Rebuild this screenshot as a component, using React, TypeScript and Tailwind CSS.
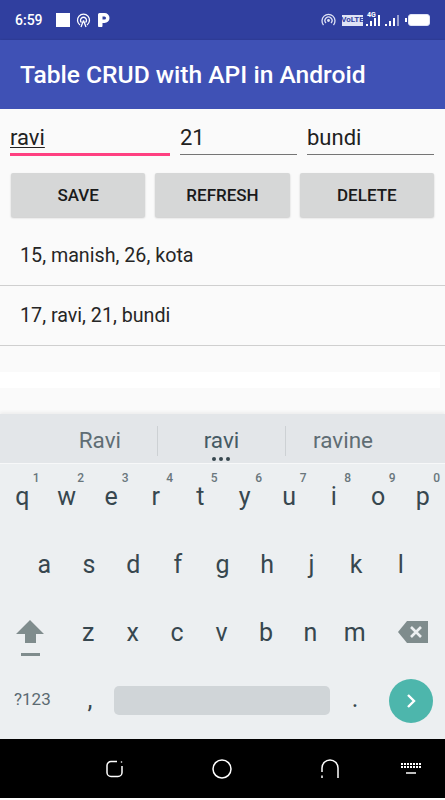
const ROBOTO = { fontFamily: 'Roboto, sans-serif' }

const ROW_ONE = [
  ['q', '1'],
  ['w', '2'],
  ['e', '3'],
  ['r', '4'],
  ['t', '5'],
  ['y', '6'],
  ['u', '7'],
  ['i', '8'],
  ['o', '9'],
  ['p', '0'],
]
const ROW_TWO = ['a', 's', 'd', 'f', 'g', 'h', 'j', 'k', 'l']
const ROW_THREE = ['z', 'x', 'c', 'v', 'b', 'n', 'm']

function StatusBar() {
  return (
    <div className="flex h-10 items-center bg-[#303f9f] pl-[15px] pr-[15px] text-white">
      <span className="text-[14px] font-medium">6:59</span>
      <div className="ml-[13px] h-[14px] w-[14px] bg-white" />
      <svg className="ml-[6px]" width="15" height="15" viewBox="0 0 15 15" fill="none" stroke="white" strokeWidth="1.3">
        <path d="M4 12 A6 6 0 1 1 11 12" />
        <path d="M5.5 9.5 A3 3 0 1 1 9.5 9.5" />
        <path d="M7.5 7.5 L5 14 M7.5 7.5 L10 14" />
      </svg>
      <svg className="ml-[7px]" width="12" height="14" viewBox="0 0 12 14" fill="white">
        <path fillRule="evenodd" d="M0 1.5 A1.5 1.5 0 0 1 1.5 0 H6.5 A5 5 0 0 1 6.5 10 H4.5 V12.5 A1.5 1.5 0 0 1 0 12.5 Z M4.5 3.5 V6.5 H6.5 A1.5 1.5 0 0 0 6.5 3.5 Z" />
      </svg>
      <svg className="ml-auto" width="15" height="15" viewBox="0 0 15 15" fill="none" stroke="#dfe3f5" strokeWidth="1.3">
        <path d="M2.5 12 A6.5 6.5 0 1 1 12.5 12" />
        <path d="M5 10 A3.5 3.5 0 1 1 10 10" />
        <circle cx="7.5" cy="7.5" r="0.8" fill="#dfe3f5" />
      </svg>
      <div className="relative ml-[6px] flex h-[11px] w-[21px] items-center justify-center bg-[#dfe3f5] text-[8px] font-bold leading-none text-[#303f9f]">
        VoLTE
      </div>
      <div className="relative ml-[3px] flex h-[12px] items-end gap-[2px]">
        <span className="absolute left-[1px] top-[-2px] text-[7px] font-bold leading-none text-white">4G</span>
        <div className="h-[2px] w-[2px] bg-white" />
        <div className="h-[5px] w-[2px] bg-white" />
        <div className="h-[8px] w-[2px] bg-white" />
        <div className="h-[11px] w-[2px] bg-white" />
      </div>
      <div className="ml-[5px] flex h-[12px] items-end gap-[2px]">
        <div className="h-[2px] w-[2px] bg-white" />
        <div className="h-[5px] w-[2px] bg-white" />
        <div className="h-[8px] w-[2px] bg-white" />
        <div className="h-[11px] w-[2px] bg-white/50" />
      </div>
      <div className="ml-[6px] h-[4px] w-[2px] bg-white" />
      <div className="ml-[1px] h-[12px] w-[22px] rounded-[3px] border border-[#dfe3f5] bg-white" />
    </div>
  )
}

function Field({ value, focused, className }: { value: string; focused?: boolean; className: string }) {
  return (
    <div
      className={
        focused
          ? `h-[35px] border-b-[3px] border-[#ff4081] text-[22px] leading-[33px] text-[#212121] ${className}`
          : `h-[34px] border-b border-[#757575] text-[22px] leading-[33px] text-[#212121] ${className}`
      }
    >
      {focused ? <span className="underline decoration-1 underline-offset-[2px]">{value}</span> : value}
    </div>
  )
}

function ActionButton({ label }: { label: string }) {
  return (
    <button
      type="button"
      className="h-[44px] rounded-[2px] bg-[#d6d7d7] pt-[2px] text-[17px] font-medium text-[#1a1a1a] shadow-[0_1px_2px_rgba(0,0,0,0.2)]"
    >
      {label}
    </button>
  )
}

function Key({ label, hint }: { label: string; hint?: string }) {
  return (
    <div className="relative flex items-center justify-center pb-[2px] text-[25px] leading-none text-[#37474f]">
      {hint && <span className="absolute right-[5px] top-[8px] text-[12px] font-medium text-[#69767c]">{hint}</span>}
      {label}
    </div>
  )
}

function Keyboard() {
  return (
    <div className="relative bg-[#eceff1] shadow-[0_-2px_3px_rgba(0,0,0,0.05)]">
      <div className="relative flex h-[49px] items-center bg-[#e3e6e9] pt-[4px] text-[22.5px] text-[#5f6d74]">
        <div className="flex w-[157px] justify-end pr-[36px]">Ravi</div>
        <div className="h-[30px] w-px bg-[#cdd1d4]" />
        <div className="flex w-[127px] justify-center text-[#455a64]">ravi</div>
        <div className="h-[30px] w-px bg-[#cdd1d4]" />
        <div className="pl-[27px]">ravine</div>
        <div className="absolute bottom-[2px] left-[212px] flex gap-[3px]">
          <div className="h-[4px] w-[4px] rounded-full bg-[#37474f]" />
          <div className="h-[4px] w-[4px] rounded-full bg-[#37474f]" />
          <div className="h-[4px] w-[4px] rounded-full bg-[#37474f]" />
        </div>
      </div>
      <div className="grid h-[68px] grid-cols-10 border-t border-[#f7f8f9]">
        {ROW_ONE.map(([k, n]) => (
          <Key key={k} label={k} hint={n} />
        ))}
      </div>
      <div className="grid h-[68px] grid-cols-9 px-[22px]">
        {ROW_TWO.map((k) => (
          <Key key={k} label={k} />
        ))}
      </div>
      <div className="flex h-[68px] items-center">
        <div className="flex w-[66px] justify-center pr-[6px] pt-[10px]">
          <svg width="32" height="38" viewBox="0 0 32 38" fill="#7f8c8d">
            <path d="M16 1 L30 15 H22 V24 H11 V15 H2 Z" />
            <rect x="7" y="34" width="19" height="3" />
          </svg>
        </div>
        <div className="grid h-full w-[311px] grid-cols-7">
          {ROW_THREE.map((k) => (
            <Key key={k} label={k} />
          ))}
        </div>
        <div className="flex flex-1 justify-end pb-[3px] pr-[17px]">
          <svg width="30" height="22" viewBox="0 0 30 22">
            <path d="M9 0 H30 V22 H9 L0 11 Z" fill="#7f8c8d" />
            <path d="M13 6 L23 16 M23 6 L13 16" stroke="#eceff1" strokeWidth="2.6" />
          </svg>
        </div>
      </div>
      <div className="flex h-[72px] items-center pb-[5px]">
        <div className="w-[66px] pb-[1px] pl-[14px] text-[17px] text-[#5b6a72]">?123</div>
        <div className="w-[48px] pb-[3px] text-center text-[25px] leading-none text-[#37474f]">,</div>
        <div className="h-[29px] w-[216px] rounded-[5px] bg-[#d0d5d8]" />
        <div className="w-[50px] pb-[4px] text-center text-[25px] leading-none text-[#37474f]">.</div>
        <div className="ml-[9px] flex h-[44px] w-[44px] items-center justify-center rounded-full bg-[#4db6ac]">
          <svg width="14" height="16" viewBox="0 0 14 16" fill="none" stroke="white" strokeWidth="2.4">
            <path d="M4 2 L10 8 L4 14" />
          </svg>
        </div>
      </div>
    </div>
  )
}

function NavBar() {
  return (
    <div className="relative flex h-[59px] items-center bg-black">
      <svg className="ml-[105px]" width="20" height="20" viewBox="0 0 20 20" fill="none" stroke="white" strokeWidth="1.5">
        <path d="M12 2.5 H6 A4 4 0 0 0 2 6.5 V13.5 A4 4 0 0 0 6 17.5 H13 A4 4 0 0 0 17 13.5 V7" />
        <circle cx="16.5" cy="3" r="0.8" fill="white" stroke="none" />
      </svg>
      <svg className="ml-[87px]" width="20" height="20" viewBox="0 0 20 20" fill="none" stroke="white" strokeWidth="1.5">
        <circle cx="10" cy="10" r="9" />
      </svg>
      <svg className="ml-[88px]" width="20" height="20" viewBox="0 0 20 20" fill="none" stroke="white" strokeWidth="1.5">
        <path d="M2 13 V9 A8 8 0 0 1 18 9 V19" />
        <path d="M2 16.5 V19" />
      </svg>
      <svg className="ml-[61px]" width="20" height="14" viewBox="0 0 20 14" fill="none" stroke="white">
        <path d="M0 2 H20 M0 5 H20" strokeWidth="2" strokeDasharray="2 1" />
        <path d="M5 11 H15" strokeWidth="1.5" />
      </svg>
    </div>
  )
}

export default function App() {
  return (
    <div className="h-[800px] w-[445px] overflow-hidden bg-white" style={ROBOTO}>
      <StatusBar />
      <div className="flex h-[69px] items-center bg-[#3f51b5] pl-[20px] pt-[2px] text-[24.6px] font-medium text-white shadow-[0_1px_3px_rgba(0,0,0,0.3)]">
        Table CRUD with API in Android
      </div>

      <div className="h-[305px] bg-[#fafafa]">
        <div className="flex gap-[10px] pl-[10px] pr-[11px] pt-[12px]">
          <Field value="ravi" focused className="w-[160px]" />
          <Field value="21" className="w-[117px]" />
          <Field value="bundi" className="w-[127px]" />
        </div>
        <div className="mt-[17px] grid grid-cols-3 gap-[10px] pl-[11px] pr-[11px]">
          <ActionButton label="SAVE" />
          <ActionButton label="REFRESH" />
          <ActionButton label="DELETE" />
        </div>
        <div className="mt-[9px]">
          <div className="flex h-[60px] items-center border-b border-[#cfcfcf] pl-[20px] text-[19.7px] text-[#262626]">
            15, manish, 26, kota
          </div>
          <div className="flex h-[60px] items-center border-b border-[#cfcfcf] pl-[20px] text-[19.7px] text-[#262626]">
            17, ravi, 21, bundi
          </div>
        </div>
        <div className="mt-[26px] h-[16px] w-[440px] bg-white" />
      </div>

      <Keyboard />
      <NavBar />
    </div>
  )
}
